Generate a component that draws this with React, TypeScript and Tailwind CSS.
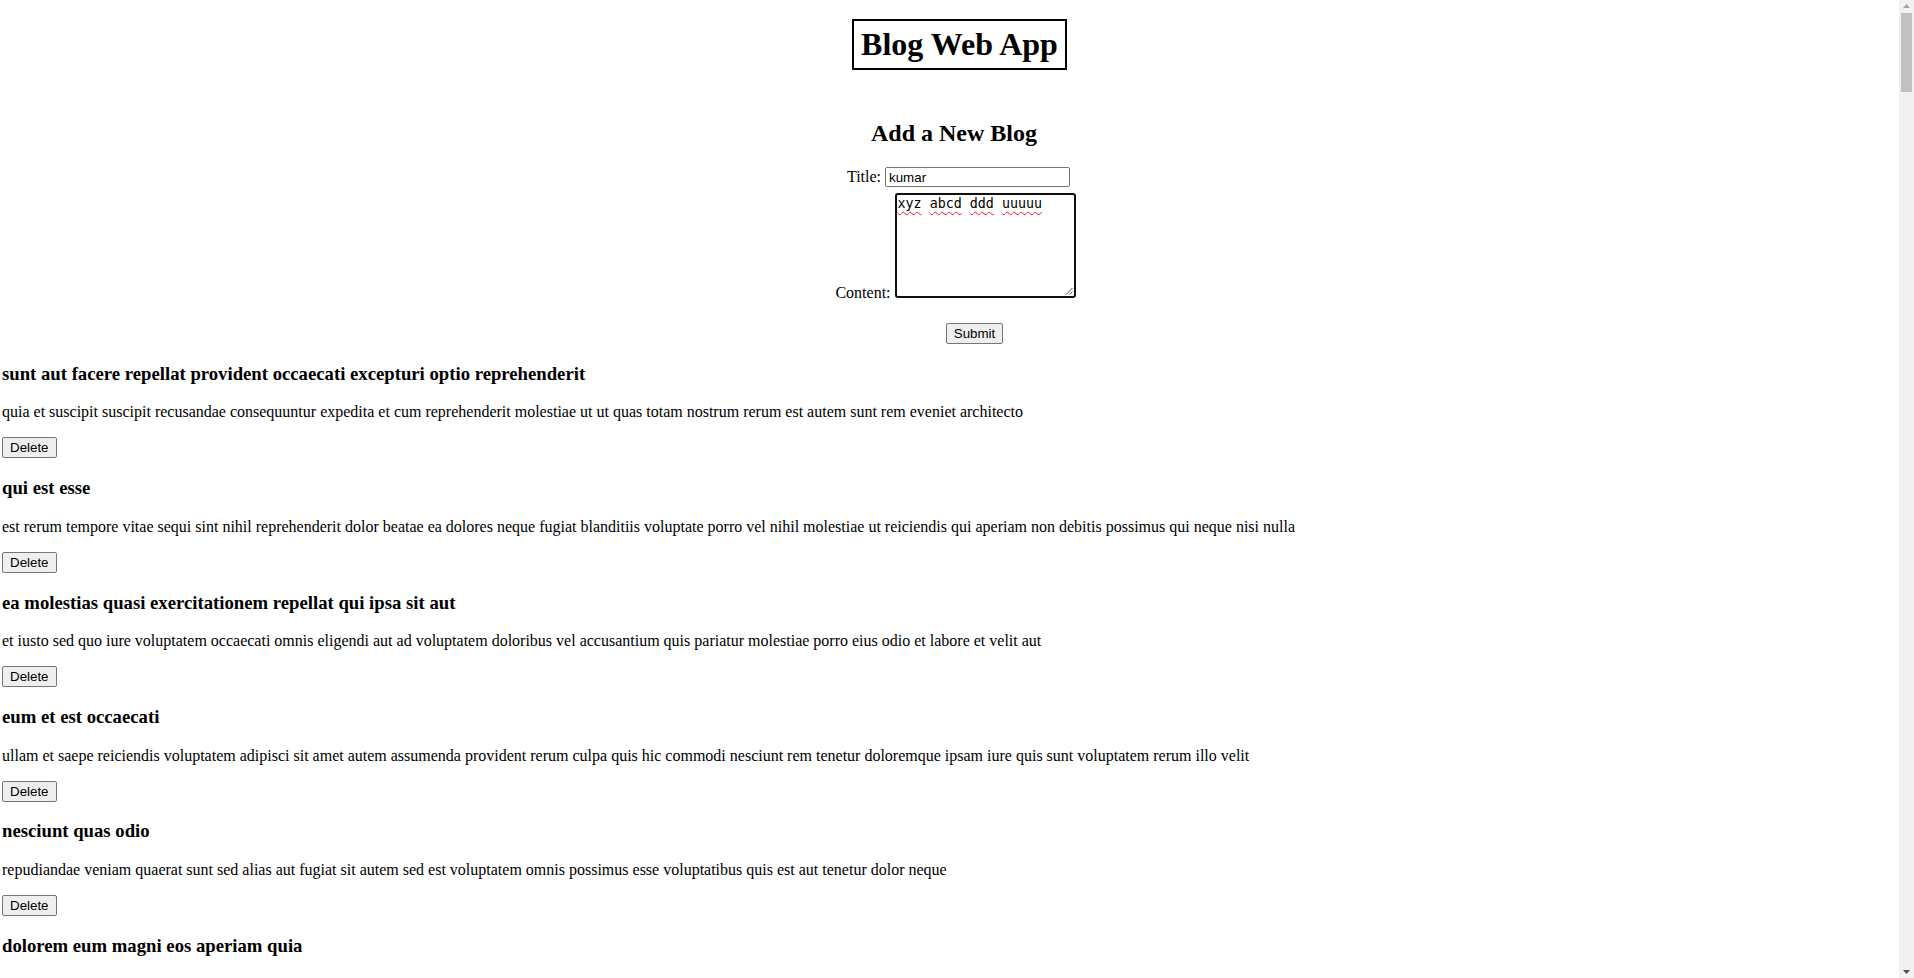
import React from "react";

type Post = { id: number; title: string; body: string };

const posts: Post[] = [
  {
    id: 1,
    title: "sunt aut facere repellat provident occaecati excepturi optio reprehenderit",
    body: "quia et suscipit suscipit recusandae consequuntur expedita et cum reprehenderit molestiae ut ut quas totam nostrum rerum est autem sunt rem eveniet architecto",
  },
  {
    id: 2,
    title: "qui est esse",
    body: "est rerum tempore vitae sequi sint nihil reprehenderit dolor beatae ea dolores neque fugiat blanditiis voluptate porro vel nihil molestiae ut reiciendis qui aperiam non debitis possimus qui neque nisi nulla",
  },
  {
    id: 3,
    title: "ea molestias quasi exercitationem repellat qui ipsa sit aut",
    body: "et iusto sed quo iure voluptatem occaecati omnis eligendi aut ad voluptatem doloribus vel accusantium quis pariatur molestiae porro eius odio et labore et velit aut",
  },
  {
    id: 4,
    title: "eum et est occaecati",
    body: "ullam et saepe reiciendis voluptatem adipisci sit amet autem assumenda provident rerum culpa quis hic commodi nesciunt rem tenetur doloremque ipsam iure quis sunt voluptatem rerum illo velit",
  },
  {
    id: 5,
    title: "nesciunt quas odio",
    body: "repudiandae veniam quaerat sunt sed alias aut fugiat sit autem sed est voluptatem omnis possimus esse voluptatibus quis est aut tenetur dolor neque",
  },
  {
    id: 6,
    title: "dolorem eum magni eos aperiam quia",
    body: "ut aspernatur corporis harum nihil quis provident sequi mollitia nobis aliquid molestiae perspiciatis et ea nemo ab reprehenderit accusantium quas voluptate dolores velit et doloremque molestiae",
  },
  {
    id: 7,
    title: "magnam facilis autem",
    body: "dolore placeat quibusdam ea quo vitae magni quis enim qui quis quo nemo aut saepe quidem repellat excepturi ut quia sunt ut sequi eos ea sed quas",
  },
  {
    id: 8,
    title: "dolorem dolore est ipsam",
    body: "dignissimos aperiam dolorem qui eum facilis quibusdam animi sint suscipit qui sint possimus cum quaerat magni maiores excepturi ipsam ut commodi dolor voluptatum modi aut vitae",
  },
  {
    id: 9,
    title: "nesciunt iure omnis dolorem tempora et accusantium",
    body: "consectetur animi nesciunt iure dolore enim quia ad veniam autem ut quam aut nobis et est aut quod aut provident voluptas autem voluptas",
  },
  {
    id: 10,
    title: "optio molestias id quia eum",
    body: "quo et expedita modi cum officia vel magni doloribus qui repudiandae vero nisi sit quos veniam quod sed accusamus veritatis error",
  },
];

const btn =
  "font-['Liberation_Sans',Arial,sans-serif] text-[13.33px] leading-[normal] text-black bg-[#efefef] border border-solid border-[#767676] rounded-[2px] px-[7px] py-[2px] cursor-default";

function Squiggle({ children }: { children: React.ReactNode }) {
  return (
    <span className="underline decoration-wavy decoration-[#e51c23] decoration-1 underline-offset-[3px]">
      {children}
    </span>
  );
}

function Scrollbar() {
  return (
    <div className="fixed top-0 right-0 h-screen w-[15px] bg-[#f1f1f1] flex flex-col items-center">
      <svg className="mt-[4px]" width="7" height="4" viewBox="0 0 7 4">
        <polygon points="3.5,0 7,4 0,4" fill="#a3a3a3" />
      </svg>
      <div className="mt-[5px] w-[11px] h-[79px] bg-[#c1c1c1]" />
      <div className="flex-1" />
      <svg className="mb-[4px]" width="7" height="4" viewBox="0 0 7 4">
        <polygon points="0,0 7,0 3.5,4" fill="#505050" />
      </svg>
    </div>
  );
}

export default function App() {
  return (
    <div className="min-h-screen bg-white text-black font-['Liberation_Serif','Times_New_Roman',serif] text-[16px] leading-[normal]">
      <div className="flex flex-col items-center">
        <h1 className="mt-[19px] ml-[5px] border-2 border-solid border-black px-[7px] py-[5px] text-[32px] font-bold leading-[normal]">
          Blog Web App
        </h1>
        <h2 className="mt-[50px] mr-[6px] text-[24px] font-bold leading-[normal]">Add a New Blog</h2>
      </div>

      <form onSubmit={(e) => e.preventDefault()}>
        <div className="mt-[20px] flex justify-center items-baseline gap-[4px] pl-[3px]">
          <label>Title:</label>
          <input
            type="text"
            defaultValue="kumar"
            className="w-[185px] h-[20px] px-[3px] font-['Liberation_Sans',Arial,sans-serif] text-[13.33px] leading-[normal] text-black bg-white border border-solid border-[#767676] rounded-[2px] outline-none"
          />
        </div>
        <div className="mt-[6px] text-center pr-[3px]">
          <label>Content:</label>{" "}
          <div className="relative inline-block overflow-hidden align-baseline w-[181px] h-[105px] border-2 border-solid border-[#101010] rounded-[3px] bg-white text-left px-[1px] pt-[1px] font-['DejaVu_Sans_Mono',monospace] text-[13.33px] leading-[normal]">
            <Squiggle>xyz</Squiggle> <Squiggle>abcd</Squiggle> <Squiggle>ddd</Squiggle>{" "}
            <Squiggle>uuuuu</Squiggle>
            <svg
              className="absolute right-[1px] bottom-[1px]"
              width="8"
              height="8"
              viewBox="0 0 8 8"
            >
              <line x1="7.5" y1="1" x2="1" y2="7.5" stroke="#555" strokeWidth="1" />
              <line x1="7.5" y1="4.5" x2="4.5" y2="7.5" stroke="#555" strokeWidth="1" />
            </svg>
          </div>
        </div>
        <div className="mt-[21px] flex justify-center pl-[35px]">
          <button type="submit" className={btn}>
            Submit
          </button>
        </div>
      </form>

      <div className="pl-[2px] pr-[15px]">
        {posts.map((p) => (
          <div key={p.id}>
            <h3 className="my-[18.72px] text-[18.72px] font-bold leading-[normal]">{p.title}</h3>
            <p className="my-[16px]">{p.body}</p>
            <button type="button" className={btn}>
              Delete
            </button>
          </div>
        ))}
      </div>

      <Scrollbar />
    </div>
  );
}
